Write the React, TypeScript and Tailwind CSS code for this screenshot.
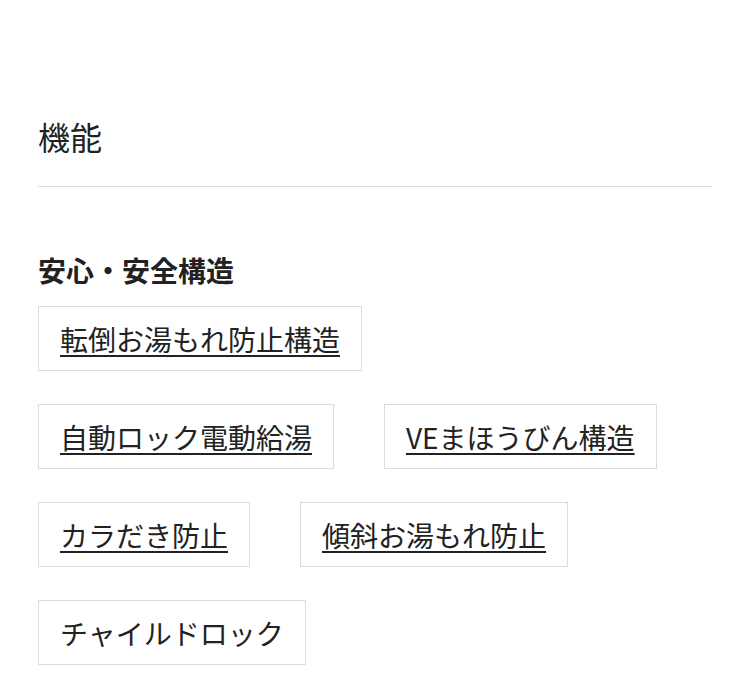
const items = [
  { label: '転倒お湯もれ防止構造', link: true },
  { label: '自動ロック電動給湯', link: true },
  { label: 'VEまほうびん構造', link: true },
  { label: 'カラだき防止', link: true },
  { label: '傾斜お湯もれ防止', link: true },
  { label: 'チャイルドロック', link: false },
];

export default function App() {
  return (
    <div
      className="min-h-[686px] w-full bg-white px-[38px] pt-[112px] text-[#222]"
      style={{ fontFamily: '"Noto Sans CJK JP", "Noto Sans", sans-serif' }}
    >
      <h2 className="border-b border-[#dcdcdc] pb-[26px] text-[32px] font-normal leading-[48px]">機能</h2>

      <section className="mt-[62px]">
        <h3 className="text-[28px] font-bold leading-[42px]">安心・安全構造</h3>
        <ul className="mt-[15px] flex flex-wrap gap-y-[33px]">
          {items.map(it => (
            <li key={it.label} className="mr-[50px] border border-[#dcdcdc] px-[21px] py-[10.5px] text-[28px] leading-[42px]">
              {it.link ? (
                <a href="#" className="underline decoration-[1.5px] underline-offset-[4px]">{it.label}</a>
              ) : (
                <span>{it.label}</span>
              )}
            </li>
          ))}
        </ul>
      </section>
    </div>
  );
}
